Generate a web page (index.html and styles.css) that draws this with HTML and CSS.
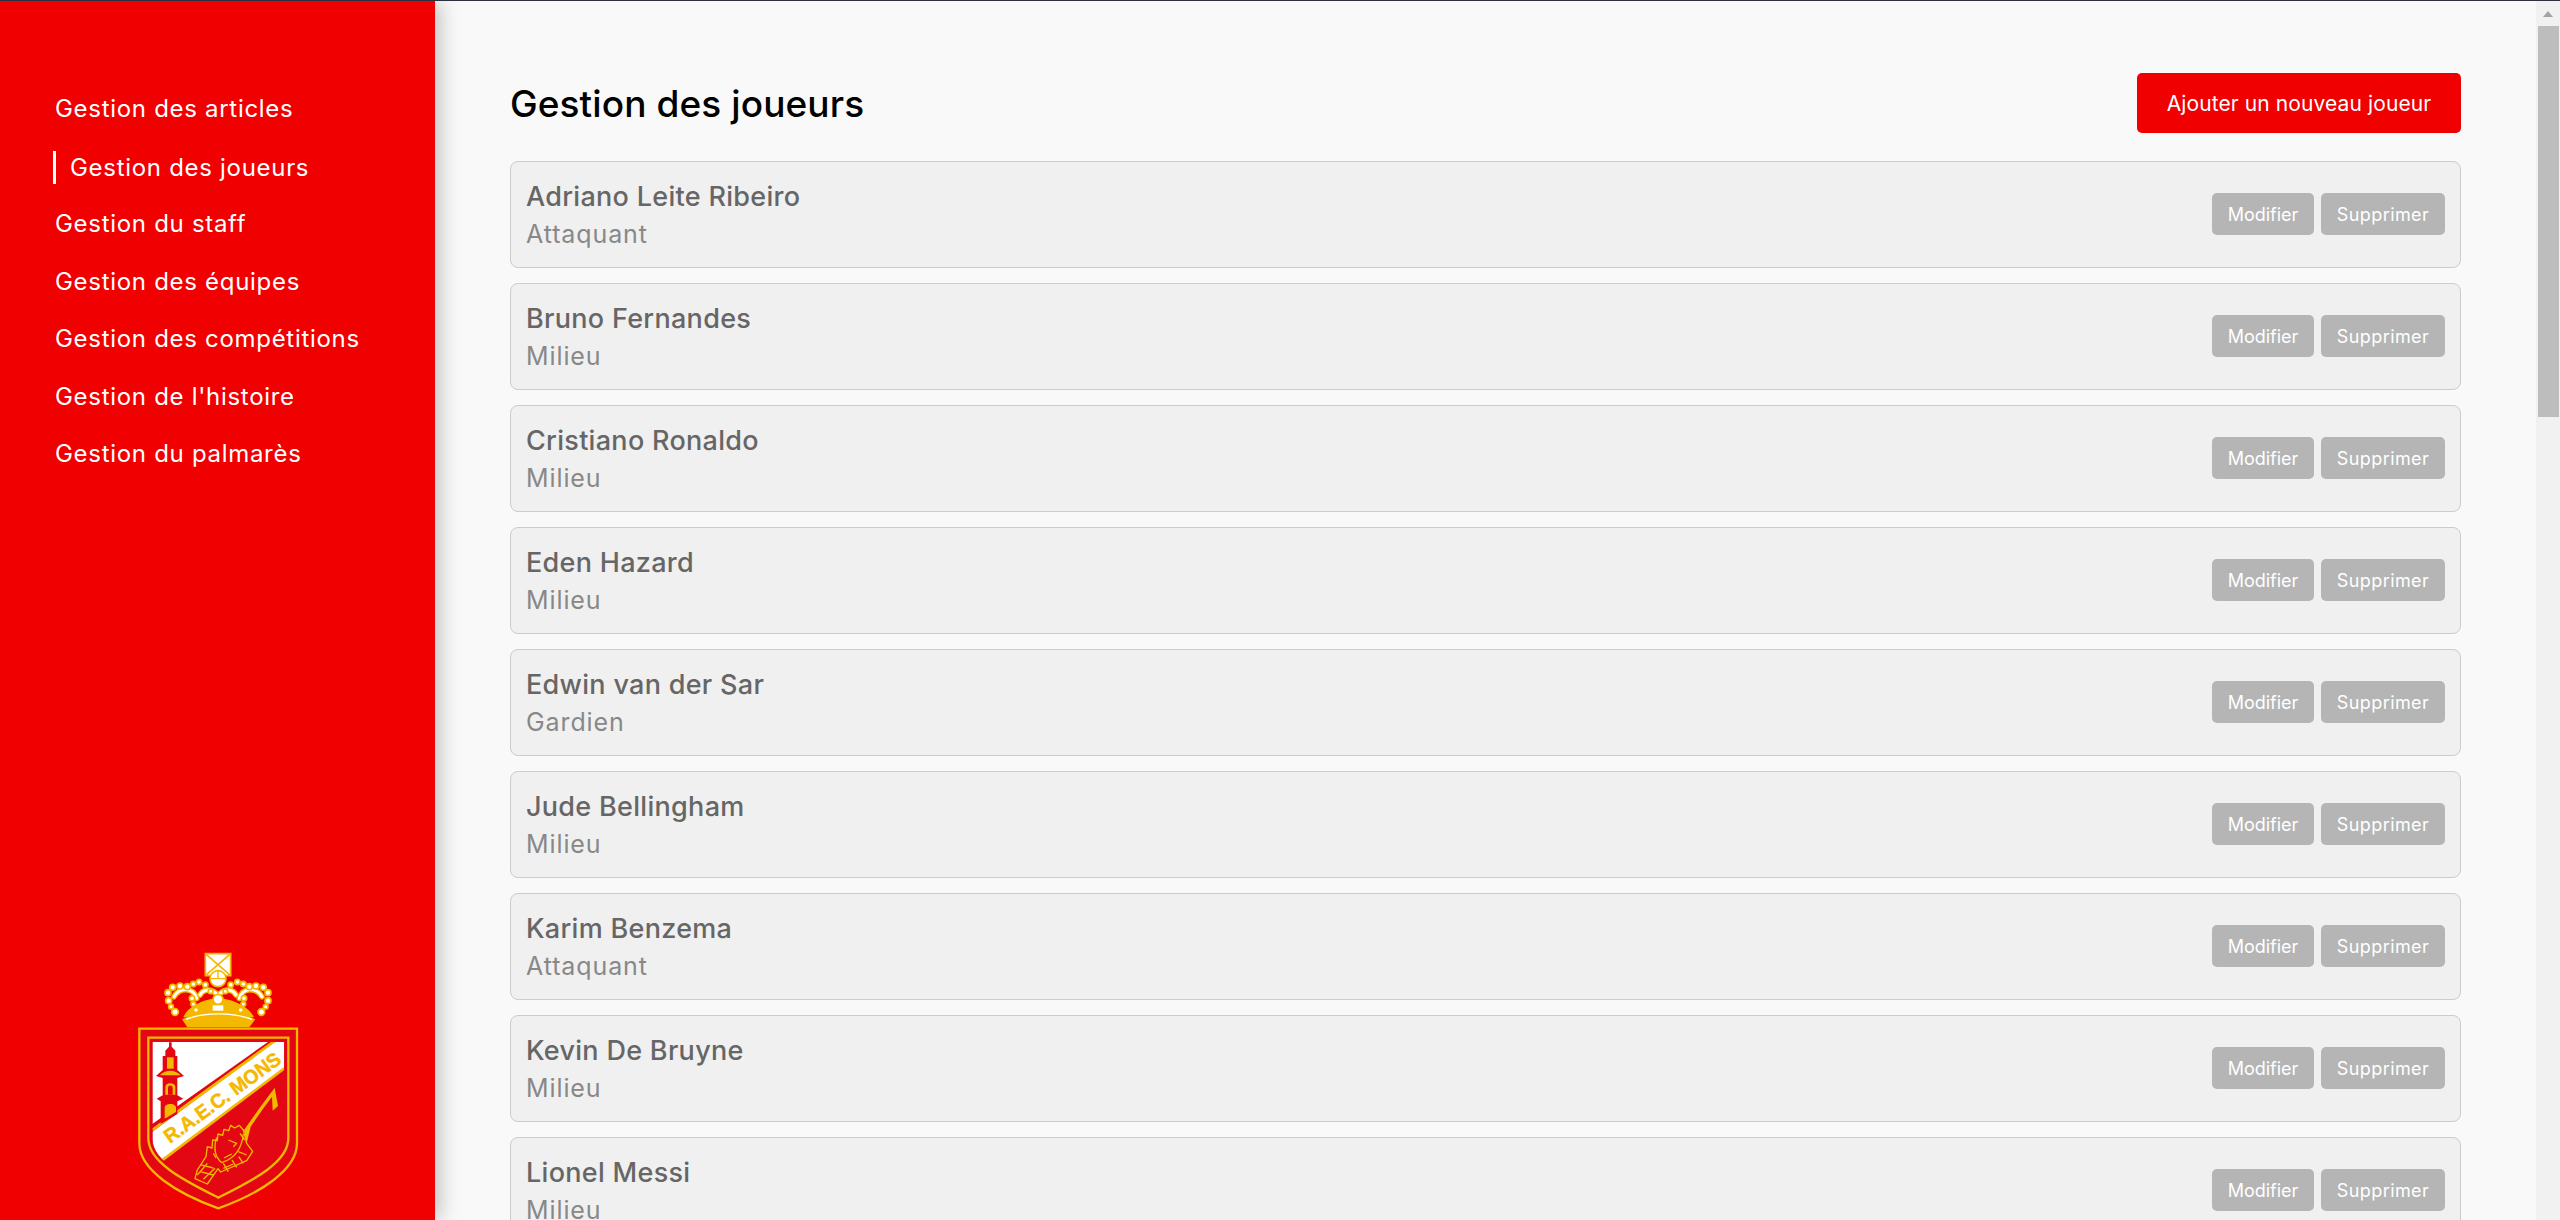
FILE: index.html
```html
<!DOCTYPE html>
<html lang="fr">
<head>
    <meta charset="UTF-8">
    <title>Gestion des joueurs</title>
    <link rel="stylesheet" href="styles.css">
</head>
<body>

<aside class="sidebar">
    <nav class="side-nav">
        <a href="#">Gestion des articles</a>
        <a href="#" class="active">Gestion des joueurs</a>
        <a href="#">Gestion du staff</a>
        <a href="#">Gestion des équipes</a>
        <a href="#">Gestion des compétitions</a>
        <a href="#">Gestion de l'histoire</a>
        <a href="#">Gestion du palmarès</a>
    </nav>
    <svg class="crest" viewBox="0 0 720 870" role="img" aria-label="R.A.E.C. Mons">
        <defs>
            <clipPath id="inner-shield">
                <path d="M157 335H553V625C553 695 445 748 355 790C265 748 157 695 157 625Z"/>
            </clipPath>
        </defs>
        <!-- croix et globe -->
        <path d="M316 71H392V137H316Z" fill="#fff" stroke="#f5b800" stroke-width="5"/>
        <path d="M316 71L354 104L392 71M316 137L354 104L392 137" fill="none" stroke="#f5b800" stroke-width="5"/>
        <circle cx="354" cy="146" r="24" fill="#fff" stroke="#f5b800" stroke-width="5"/>
        <path d="M330 146H378M354 122V146" stroke="#f5b800" stroke-width="4"/>
        <!-- couronne -->
        <path d="M250 262C262 228 320 205 354 205C390 205 446 228 462 262Z" fill="#f5b800"/>
        <g fill="none" stroke-linecap="round">
            <g stroke="#f5b800" stroke-width="17">
                <path d="M222 200C240 170 280 172 290 205"/>
                <path d="M300 195C308 178 330 175 348 190"/>
                <path d="M486 200C468 170 428 172 418 205"/>
                <path d="M408 195C400 178 378 175 360 190"/>
            </g>
            <g stroke="#fff" stroke-width="9">
                <path d="M222 200C240 170 280 172 290 205"/>
                <path d="M300 195C308 178 330 175 348 190"/>
                <path d="M486 200C468 170 428 172 418 205"/>
                <path d="M408 195C400 178 378 175 360 190"/>
            </g>
        </g>
        <g fill="#fff" stroke="#f5b800" stroke-width="5">
            <circle cx="204" cy="188" r="9"/><circle cx="206" cy="212" r="9"/><circle cx="225" cy="246" r="10"/>
            <circle cx="213" cy="230" r="7"/><circle cx="218" cy="172" r="9"/><circle cx="240" cy="168" r="9"/>
            <circle cx="262" cy="170" r="9"/><circle cx="280" cy="162" r="8"/><circle cx="297" cy="156" r="8"/>
            <circle cx="316" cy="164" r="8"/><circle cx="332" cy="184" r="7"/><circle cx="354" cy="208" r="15"/>
            <circle cx="288" cy="240" r="8"/><circle cx="276" cy="205" r="8"/><circle cx="280" cy="222" r="7"/>
            <circle cx="376" cy="184" r="7"/><circle cx="392" cy="164" r="8"/><circle cx="412" cy="156" r="8"/>
            <circle cx="430" cy="162" r="8"/><circle cx="448" cy="170" r="9"/><circle cx="468" cy="168" r="9"/>
            <circle cx="490" cy="172" r="9"/><circle cx="504" cy="188" r="9"/><circle cx="504" cy="212" r="9"/>
            <circle cx="497" cy="230" r="7"/><circle cx="484" cy="246" r="10"/><circle cx="422" cy="240" r="8"/>
            <circle cx="432" cy="205" r="8"/><circle cx="430" cy="222" r="7"/>
        </g>
        <path d="M338 226H370V242H338Z" fill="#fff"/>
        <path d="M246 268C300 240 410 240 466 268L448 292H262Z" fill="#f5b800"/>
        <path d="M258 268C310 246 400 246 456 268" fill="none" stroke="#fff" stroke-width="4"/>
        <!-- ecusson -->
        <path d="M118 296H591V640C591 720 480 790 355 835C230 790 118 720 118 640Z" fill="#e30613" stroke="#f5b800" stroke-width="7"/>
        <path d="M145 323H565V625C565 700 450 755 355 803C260 755 145 700 145 625Z" fill="#e30613" stroke="#f5b800" stroke-width="7"/>
        <g clip-path="url(#inner-shield)">
            <path d="M157 335H505L157 582Z" fill="#fff"/>
            <path d="M157 605L525 335H553V415L185 690L157 690Z" fill="#fff"/>
            <path d="M157 600L525 332" stroke="#f5b800" stroke-width="8"/>
            <path d="M553 415L185 692" stroke="#f5b800" stroke-width="8"/>
        </g>
        <!-- beffroi -->
        <path d="M207 337H215V350L226 362V378H232V420L252 438L232 444V496L250 506L232 514V552L182 582V514L170 506L188 496V444L168 438L188 420V378H196V362L207 350Z" fill="#e30613"/>
        <path d="M201 382H221V416H201Z" fill="#f5b800"/>
        <path d="M180 436C195 418 225 418 242 436Z" fill="#f5b800"/>
        <path d="M196 494V472C196 456 226 456 226 472V494Z" fill="#f5b800"/>
        <path d="M204 494V474C204 464 218 464 218 474V494Z" fill="#e30613"/>
        <path d="M194 566V534C194 518 228 518 228 534V546Z" fill="#f5b800"/>
        <text class="crest-text" transform="translate(210 642) rotate(-36)" textLength="418" lengthAdjust="spacingAndGlyphs">R.A.E.C. MONS</text>
        <!-- doudou -->
        <path d="M432 600L476 538L510 492L524 474L534 528L518 542L516 500L488 538L452 590L440 640Z" fill="#f5b800"/>
        <g fill="none" stroke="#f5b800" stroke-width="4" stroke-linejoin="round">
            <path d="M318 680L322 650L336 654L338 630L352 632L354 612L368 616L372 598L386 602L392 586L404 594L418 586L430 600L440 640L458 664L440 692L362 726L354 716L322 762L285 746L292 720Z"/>
            <path d="M350 622C338 660 350 685 365 698C405 685 426 652 430 612"/>
            <path d="M300 725L340 735M300 704L340 714M310 748L345 715M292 735L322 700"/>
            <path d="M385 630L410 640L400 650M372 684L395 672M415 665L440 675M340 670L348 684M420 610L434 630"/>
            <path d="M370 715L400 702M385 725L370 700M410 712L396 690M430 700L416 680"/>
        </g>
    </svg>
</aside>

<main class="content">
    <div class="page-head">
        <h1>Gestion des joueurs</h1>
        <button class="btn-add">Ajouter un nouveau joueur</button>
    </div>
    <ul class="player-list">
        <li class="player">
            <div class="info"><h3>Adriano Leite Ribeiro</h3><p>Attaquant</p></div>
            <div class="actions"><button class="btn-edit">Modifier</button><button class="btn-del">Supprimer</button></div>
        </li>
        <li class="player">
            <div class="info"><h3>Bruno Fernandes</h3><p>Milieu</p></div>
            <div class="actions"><button class="btn-edit">Modifier</button><button class="btn-del">Supprimer</button></div>
        </li>
        <li class="player">
            <div class="info"><h3>Cristiano Ronaldo</h3><p>Milieu</p></div>
            <div class="actions"><button class="btn-edit">Modifier</button><button class="btn-del">Supprimer</button></div>
        </li>
        <li class="player">
            <div class="info"><h3>Eden Hazard</h3><p>Milieu</p></div>
            <div class="actions"><button class="btn-edit">Modifier</button><button class="btn-del">Supprimer</button></div>
        </li>
        <li class="player">
            <div class="info"><h3>Edwin van der Sar</h3><p>Gardien</p></div>
            <div class="actions"><button class="btn-edit">Modifier</button><button class="btn-del">Supprimer</button></div>
        </li>
        <li class="player">
            <div class="info"><h3>Jude Bellingham</h3><p>Milieu</p></div>
            <div class="actions"><button class="btn-edit">Modifier</button><button class="btn-del">Supprimer</button></div>
        </li>
        <li class="player">
            <div class="info"><h3>Karim Benzema</h3><p>Attaquant</p></div>
            <div class="actions"><button class="btn-edit">Modifier</button><button class="btn-del">Supprimer</button></div>
        </li>
        <li class="player">
            <div class="info"><h3>Kevin De Bruyne</h3><p>Milieu</p></div>
            <div class="actions"><button class="btn-edit">Modifier</button><button class="btn-del">Supprimer</button></div>
        </li>
        <li class="player">
            <div class="info"><h3>Lionel Messi</h3><p>Milieu</p></div>
            <div class="actions"><button class="btn-edit">Modifier</button><button class="btn-del">Supprimer</button></div>
        </li>
    </ul>
</main>

<div class="scrollbar">
    <div class="scroll-up"></div>
    <div class="scroll-thumb"></div>
</div>

</body>
</html>
```

FILE: styles.css
```css
* {
    margin: 0;
    padding: 0;
    box-sizing: border-box;
}

html, body {
    height: 100%;
    overflow: hidden;
}

body {
    font-family: 'Inter', 'Liberation Sans', sans-serif;
    background-color: #f9f9f9;
    border-top: 1px solid #2c3040;
    display: flex;
}

.sidebar {
    width: 435px;
    height: 1219px;
    flex-shrink: 0;
    background-color: #f00000;
    box-shadow: 4px 0 20px rgba(0, 0, 0, 0.25);
    display: flex;
    flex-direction: column;
    justify-content: space-between;
    align-items: center;
    position: relative;
}

.side-nav {
    width: 100%;
    padding: 90px 0 0 55px;
    display: flex;
    flex-direction: column;
    gap: 21px;
}

.side-nav a {
    color: #fff;
    font-size: 24px;
    letter-spacing: 0.7px;
    line-height: 36.5px;
    text-decoration: none;
}

.side-nav a.active {
    margin-left: -2px;
    padding-left: 14px;
    border-left: 3px solid #fff;
    line-height: 33px;
    margin-top: 2px;
    margin-bottom: 1.5px;
}

.crest {
    width: 240px;
    height: 290px;
    margin-left: 5px;
    display: block;
    flex-shrink: 0;
}

.crest-text {
    font-family: 'Liberation Sans', sans-serif;
    font-weight: bold;
    font-size: 60px;
    fill: #f5b800;
    stroke: #f5b800;
    stroke-width: 1.5px;
}

.content {
    flex: 1;
    padding: 72px 75px 0;
    min-width: 0;
}

.page-head {
    display: flex;
    justify-content: space-between;
    align-items: center;
    height: 60px;
    margin-bottom: 28px;
}

h1 {
    font-size: 37px;
    font-weight: 500;
    letter-spacing: 0.1px;
    color: #000;
}

.btn-add {
    width: 324px;
    height: 60px;
    background-color: #f00000;
    color: #fff;
    border: none;
    border-radius: 5px;
    font-family: inherit;
    font-size: 21px;
    letter-spacing: 0.1px;
}

.player-list {
    list-style: none;
    display: flex;
    flex-direction: column;
    gap: 15px;
}

.player {
    height: 107px;
    flex-shrink: 0;
    background-color: #f0f0f0;
    border: 1px solid #ccc;
    border-radius: 8px;
    padding: 0 15px;
    display: flex;
    justify-content: space-between;
    align-items: center;
}

.info {
    padding-top: 2px;
}

.player h3 {
    font-size: 27px;
    font-weight: 500;
    letter-spacing: 0.3px;
    color: #666;
    line-height: 38px;
}

.player p {
    font-size: 25px;
    letter-spacing: 0.9px;
    color: #888;
    line-height: 37px;
}

.actions {
    display: flex;
    gap: 7px;
    margin-bottom: 1px;
}

.actions button {
    height: 42px;
    background-color: #b5b5b5;
    color: #fff;
    border: none;
    border-radius: 5px;
    font-family: inherit;
    font-size: 18px;
}

.actions .btn-edit {
    width: 102px;
}

.actions .btn-del {
    width: 124px;
    letter-spacing: 0.4px;
}

.scrollbar {
    width: 24px;
    height: 1219px;
    flex-shrink: 0;
    background-color: #f1f1f1;
}

.scroll-up {
    height: 25px;
    position: relative;
}

.scroll-up::after {
    content: '';
    position: absolute;
    left: 7px;
    top: 10px;
    border-left: 5.5px solid transparent;
    border-right: 5.5px solid transparent;
    border-bottom: 6px solid #a3a3a3;
}

.scroll-thumb {
    height: 391px;
    margin: 0 1px 0 2px;
    background-color: #bdbdbd;
}
```
